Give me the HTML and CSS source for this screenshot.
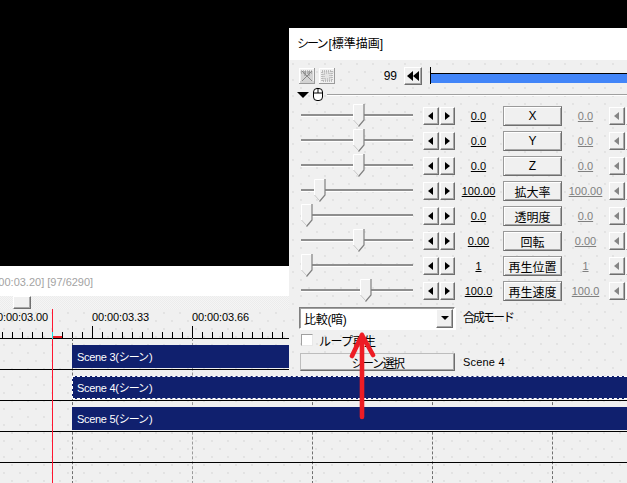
FILE: index.html
```html
<!DOCTYPE html>
<html lang="ja">
<head>
<meta charset="utf-8">
<title>シーン[標準描画]</title>
<link rel="stylesheet" href="styles.css">
</head>
<body>
<svg class="defs" width="0" height="0" aria-hidden="true">
  <symbol id="thumb" viewBox="0 0 12 23">
    <path d="M.5 .5H11V16L5.5 22 .5 16Z" fill="#f0f0f0"/>
    <path d="M.5 16V.5H10.5" fill="none" stroke="#fff"/>
    <path d="M11 0V16L5.5 22.5" fill="none" stroke="#808080" stroke-width="1.2"/>
    <path d="M.5 16L5 21" fill="none" stroke="#c8c8c8"/>
  </symbol>
</svg>

<div class="preview"></div>
<div class="status"><span class="status-text">[00:00:03.20] [97/6290]</span></div>
<div class="scroll"><div class="scroll-thumb"></div></div>

<div class="timeline">
  <div class="ruler">
    <span class="time time-a">00:00:03.00</span>
    <span class="time time-b">00:00:03.33</span>
    <span class="time time-c">00:00:03.66</span>
    <i class="major major-b"></i>
    <i class="major major-c"></i>
    <i class="range"></i>
  </div>
  <div class="tracks">
    <i class="grid grid-1"></i><i class="grid grid-2"></i><i class="grid grid-3"></i><i class="grid grid-4"></i><i class="grid grid-5"></i>
    <div class="track"><div class="clip">Scene 3(<span class="kana">シーン</span>)</div></div>
    <div class="track"><div class="clip clip-selected">Scene 4(<span class="kana">シーン</span>)</div></div>
    <div class="track"><div class="clip">Scene 5(<span class="kana">シーン</span>)</div></div>
    <div class="track"></div>
    <div class="track track-last"></div>
  </div>
  <i class="cursor"></i>
  <i class="cursor-head"></i>
</div>

<section class="panel">
  <header class="panel-title"><span class="kana-title">シーン</span>[標準描画]</header>
  <div class="panel-body">
    <div class="toolbar">
      <span class="tool">
        <svg width="16" height="16" viewBox="0 0 16 16"><path d="M2 3H14V13H2Z" fill="#d4d4d4"/><path d="M3 3L13 13M13 3L3 13M6 3V8M10 3V8" stroke="#8a8a8a"/><path d="M2 3H14M2 5H14" stroke="#8a8a8a" stroke-dasharray="1 1"/><path d="M1 14H15" stroke="#b4b4b4"/></svg>
      </span>
      <span class="tool tool-second">
        <svg width="16" height="16" viewBox="0 0 16 16"><path d="M3 3H13V13H3Z" fill="#e4e4e4" stroke="#8a8a8a" stroke-dasharray="1 1"/><path d="M5 5H11V11H5Z" fill="none" stroke="#a8a8a8" stroke-dasharray="1 1"/></svg>
      </span>
      <span class="frame-count">99</span>
      <span class="btn rewind"><i class="tri-l"></i><i class="tri-l"></i></span>
      <div class="frame-bar"></div>
    </div>

    <div class="section">
      <i class="collapse"></i>
      <svg class="mouse" width="11" height="13" viewBox="0 0 11 13"><rect x=".5" y=".5" width="9" height="12" rx="3.5" fill="#fff" stroke="#000"/><path d="M.5 5H9.5M5 .5V5" stroke="#000"/></svg>
      <span class="rule"></span>
    </div>

    <div class="rows">
      <div class="row">
        <div class="slider"><svg class="thumb" style="left:52px" width="12" height="23"><use href="#thumb"/></svg></div>
        <div class="spin"><span class="btn"><i class="tri-l"></i></span><span class="btn"><i class="tri-r"></i></span></div>
        <span class="value">0.0</span><span class="btn param">X</span><span class="value muted">0.0</span>
        <div class="spin spin-muted"><span class="btn"><i class="tri-l"></i></span><span class="btn"><i class="tri-r"></i></span></div>
      </div>
      <div class="row">
        <div class="slider"><svg class="thumb" style="left:52px" width="12" height="23"><use href="#thumb"/></svg></div>
        <div class="spin"><span class="btn"><i class="tri-l"></i></span><span class="btn"><i class="tri-r"></i></span></div>
        <span class="value">0.0</span><span class="btn param">Y</span><span class="value muted">0.0</span>
        <div class="spin spin-muted"><span class="btn"><i class="tri-l"></i></span><span class="btn"><i class="tri-r"></i></span></div>
      </div>
      <div class="row">
        <div class="slider"><svg class="thumb" style="left:52px" width="12" height="23"><use href="#thumb"/></svg></div>
        <div class="spin"><span class="btn"><i class="tri-l"></i></span><span class="btn"><i class="tri-r"></i></span></div>
        <span class="value">0.0</span><span class="btn param">Z</span><span class="value muted">0.0</span>
        <div class="spin spin-muted"><span class="btn"><i class="tri-l"></i></span><span class="btn"><i class="tri-r"></i></span></div>
      </div>
      <div class="row">
        <div class="slider"><svg class="thumb" style="left:13px" width="12" height="23"><use href="#thumb"/></svg></div>
        <div class="spin"><span class="btn"><i class="tri-l"></i></span><span class="btn"><i class="tri-r"></i></span></div>
        <span class="value">100.00</span><span class="btn param">拡大率</span><span class="value muted">100.00</span>
        <div class="spin spin-muted"><span class="btn"><i class="tri-l"></i></span><span class="btn"><i class="tri-r"></i></span></div>
      </div>
      <div class="row">
        <div class="slider"><svg class="thumb" style="left:0" width="12" height="23"><use href="#thumb"/></svg></div>
        <div class="spin"><span class="btn"><i class="tri-l"></i></span><span class="btn"><i class="tri-r"></i></span></div>
        <span class="value">0.0</span><span class="btn param">透明度</span><span class="value muted">0.0</span>
        <div class="spin spin-muted"><span class="btn"><i class="tri-l"></i></span><span class="btn"><i class="tri-r"></i></span></div>
      </div>
      <div class="row">
        <div class="slider"><svg class="thumb" style="left:52px" width="12" height="23"><use href="#thumb"/></svg></div>
        <div class="spin"><span class="btn"><i class="tri-l"></i></span><span class="btn"><i class="tri-r"></i></span></div>
        <span class="value">0.00</span><span class="btn param">回転</span><span class="value muted">0.00</span>
        <div class="spin spin-muted"><span class="btn"><i class="tri-l"></i></span><span class="btn"><i class="tri-r"></i></span></div>
      </div>
      <div class="row">
        <div class="slider"><svg class="thumb" style="left:0" width="12" height="23"><use href="#thumb"/></svg></div>
        <div class="spin"><span class="btn"><i class="tri-l"></i></span><span class="btn"><i class="tri-r"></i></span></div>
        <span class="value">1</span><span class="btn param">再生位置</span><span class="value muted">1</span>
        <div class="spin spin-muted"><span class="btn"><i class="tri-l"></i></span><span class="btn"><i class="tri-r"></i></span></div>
      </div>
      <div class="row">
        <div class="slider"><svg class="thumb" style="left:59px" width="12" height="23"><use href="#thumb"/></svg></div>
        <div class="spin"><span class="btn"><i class="tri-l"></i></span><span class="btn"><i class="tri-r"></i></span></div>
        <span class="value">100.0</span><span class="btn param">再生速度</span><span class="value muted">100.0</span>
        <div class="spin spin-muted"><span class="btn"><i class="tri-l"></i></span><span class="btn"><i class="tri-r"></i></span></div>
      </div>
    </div>

    <div class="blend">
      <div class="select"><span class="select-text">比較(暗)</span><span class="btn select-arrow"><i class="tri-d"></i></span></div>
      <span class="cjk blend-label">合成モード</span>
    </div>
    <div class="loop"><span class="check"></span><span class="cjk">ループ再生</span></div>
    <div class="scene">
      <span class="btn scene-btn cjk">シーン選択</span>
      <span class="scene-name">Scene 4</span>
    </div>
  </div>
</section>

<svg class="arrow" width="30" height="90" viewBox="0 0 30 90" aria-hidden="true">
  <path d="M13 3V85M13 3L3 24M13 3L24 23" fill="none" stroke="#ed1c24" stroke-width="4.6" stroke-linecap="round" stroke-linejoin="round"/>
</svg>
</body>
</html>
```
FILE: styles.css
```css
* { box-sizing: border-box; }
html, body { margin: 0; height: 100%; }
body {
  position: relative;
  width: 627px;
  height: 483px;
  overflow: hidden;
  background: #f0f0f0;
  color: #000;
  font-family: "Liberation Sans", "Noto Sans CJK JP", sans-serif;
  font-size: 11px;
}
i { display: block; font-style: normal; }
.defs { position: absolute; }

.preview { height: 266px; background: #000; }
.status {
  height: 30px;
  width: 289px;
  background: #fff;
  display: flex;
  align-items: center;
  overflow: hidden;
  color: #a3a3a3;
  font-size: 11px;
  white-space: nowrap;
}
.status-text { margin-left: -20px; padding-top: 1px; }
.scroll {
  height: 13px;
  background: repeating-conic-gradient(#f5f5f5 0 25%, #ececec 0 50%) 0 0 / 2px 2px;
  padding-left: 13px;
}
.scroll-thumb {
  width: 18px;
  height: 13px;
  background: #f0f0f0;
  border: 1px solid;
  border-color: #fff #707070 #707070 #fff;
  box-shadow: inset -1px -1px 0 #a8a8a8;
}

.timeline { position: relative; }
.timeline, .panel-body {
  background-color: #f0f0f0;
  background-image:
    radial-gradient(circle at 1px 1px, #e3e3e3 0, #e3e3e3 .7px, transparent .9px),
    radial-gradient(circle at 1px 1px, #e3e3e3 0, #e3e3e3 .7px, transparent .9px);
  background-size: 16px 16px;
  background-position: 3px 3px, 11px 11px;
}
.ruler {
  position: relative;
  height: 30px;
  border-bottom: 1px solid #000;
  background-image: repeating-linear-gradient(90deg, #000 0 1px, transparent 1px 10px);
  background-size: 100% 6px;
  background-position: 2px bottom;
  background-repeat: no-repeat;
}
.time { position: absolute; top: 2px; line-height: 13px; letter-spacing: -.1px; }
.time-a { left: -9px; }
.time-b { left: 92px; }
.time-c { left: 192px; }
.major { position: absolute; bottom: 0; width: 1px; height: 12px; background: #000; }
.major-b { left: 92px; }
.major-c { left: 192px; }
.range { position: absolute; left: 53px; bottom: 0; width: 9px; height: 2px; background: #ed1c24; }

.tracks { position: relative; }
.track {
  position: relative;
  height: 31px;
  border-bottom: 1px solid #000;
  padding: 6px 0 1px 72px;
}
.track-last { height: 21px; border-bottom: 0; }
.clip {
  height: 23px;
  background: #10206e;
  color: #fff;
  padding: 1px 0 0 5px;
  line-height: 23px;
  white-space: nowrap;
  letter-spacing: -.3px;
}
.kana { letter-spacing: -1px; margin-right: 1px; }
.clip-selected { border: 1px dashed #fff; border-right: 0; padding: 1px 0 0 4px; line-height: 21px; }
.grid { position: absolute; top: -1px; bottom: 0; width: 0; border-left: 1px dashed #707070; }
.grid-1 { left: 72px; }
.grid-2 { left: 192px; border-color: #9a9a9a; }
.grid-3 { left: 312px; }
.grid-4 { left: 432px; }
.grid-5 { left: 552px; }
.cursor { position: absolute; left: 52px; top: 0; bottom: 0; width: 1px; background: #ff1530; }
.cursor-head { position: absolute; left: 52px; top: 23px; width: 1px; height: 7px; background: #20e0e0; }

.panel {
  position: absolute;
  left: 289px;
  top: 28px;
  width: 338px;
  height: 348px;
  overflow: hidden;
}
.panel-title {
  height: 32px;
  background: #fff;
  padding-left: 8px;
  font-size: 12px;
  line-height: 32px;
  white-space: nowrap;
}
.kana-title { letter-spacing: -2px; margin-right: 2px; }
.panel-body { height: 316px; padding-top: 7px; }

.btn {
  display: flex;
  align-items: center;
  justify-content: center;
  background: #f0f0f0;
  border: 1px solid;
  border-color: #fff #6e6e6e #6e6e6e #fff;
  box-shadow: inset -1px -1px 0 #a8a8a8;
  flex: none;
}
.tri-l, .tri-r, .tri-d { width: 0; height: 0; border-style: solid; border-color: transparent; }
.tri-l { border-width: 4.5px 5px 4.5px 0; border-right-color: #000; }
.tri-r { border-width: 4.5px 0 4.5px 5px; border-left-color: #000; }
.tri-d { border-width: 4px 4px 0; border-top-color: #000; }

.toolbar { display: flex; align-items: center; height: 17px; }
.tool { display: flex; width: 16px; height: 16px; margin-left: 10px; box-shadow: inset -1px -1px 0 #9a9a9a, inset 1px 1px 0 #fff; }
.tool-second { margin-left: 4px; }
.frame-count { flex: none; width: 62px; margin-right: 7px; text-align: right; font-size: 12px; }
.rewind { width: 18px; height: 18px; padding-right: 1px; }
.rewind .tri-l { border-width: 5.5px 6px 5.5px 0; }
.frame-bar {
  margin-left: 8px;
  flex: 1;
  height: 17px;
  border-left: 1px solid #000;
  background: linear-gradient(#f0f0f0 0 6px, #000 6px 7px, #4285f8 7px 16px, #f0f0f0 16px);
}

.section { display: flex; align-items: center; height: 13px; margin-top: 4px; padding-left: 8px; }
.collapse { width: 0; height: 0; border-style: solid; border-width: 6px 6px 0; border-color: #000 transparent transparent; }
.mouse { margin-left: 4px; flex: none; }
.rule { flex: 1; height: 1px; background: #a0a0a0; margin-left: 3px; box-shadow: 0 1px 0 #fff; }

.rows { margin-top: 3px; }
.row {
  display: grid;
  grid-template-columns: 112px 42px 48px 59px 47px 34px;
  align-items: center;
  height: 25px;
  padding-left: 12px;
  white-space: nowrap;
}
.slider {
  position: relative;
  height: 3px;
  margin-top: -3px;
  background: linear-gradient(#8e8e8e 0 2px, #fff 2px);
}
.thumb { position: absolute; top: -10px; }
.spin { display: flex; margin-left: 10px; gap: 1px; margin-top: -2px; width: 32px; }
.spin .btn { width: 15.5px; height: 18px; }
.spin-muted { margin-left: 0; }
.spin-muted .tri-l, .spin-muted .tri-r { opacity: .45; }
.value { text-align: center; text-decoration: underline; font-size: 11px; margin: -2px 0 0 -1px; }
.muted { color: #808080; margin-left: 0; }
.param {
  height: 20px;
  border-color: #9a9a9a #6e6e6e #6e6e6e #9a9a9a;
  box-shadow: inset 1px 1px 0 #fff, inset -1px -1px 0 #a8a8a8;
  font-size: 12px;
  margin-top: -1px;
}

.cjk { font-size: 12px; }
.blend { display: flex; align-items: center; gap: 8px; height: 22px; margin-top: 3px; margin-left: 10px; }
.select {
  display: flex;
  align-items: center;
  justify-content: space-between;
  width: 156px;
  height: 22px;
  background: #fff;
  border: 1px solid;
  border-color: #808080 #fff #fff #808080;
  box-shadow: inset 1px 1px 0 #a0a0a0, 1px 1px 0 #fff;
  padding: 1px;
}
.select-text { font-size: 12px; padding-left: 3px; letter-spacing: -.3px; }
.select-arrow { width: 17px; height: 19px; }
.blend-label { margin-top: -3px; letter-spacing: -2px; }
.loop { display: flex; align-items: center; gap: 6px; height: 12px; margin-top: 5px; margin-left: 12px; letter-spacing: -.6px; }
.check { width: 12px; height: 12px; background: #fff; border: 1px solid; border-color: #a0a0a0 #e8e8e8 #e8e8e8 #a0a0a0; }
.scene { display: flex; align-items: center; gap: 8px; height: 18px; margin-top: 7px; margin-left: 11px; }
.scene-btn { width: 155px; height: 18px; border-color: #bdbdbd #6e6e6e #6e6e6e #bdbdbd; letter-spacing: -1.5px; }
.scene-name { letter-spacing: .2px; }

.arrow { position: absolute; left: 349px; top: 332px; }
```
